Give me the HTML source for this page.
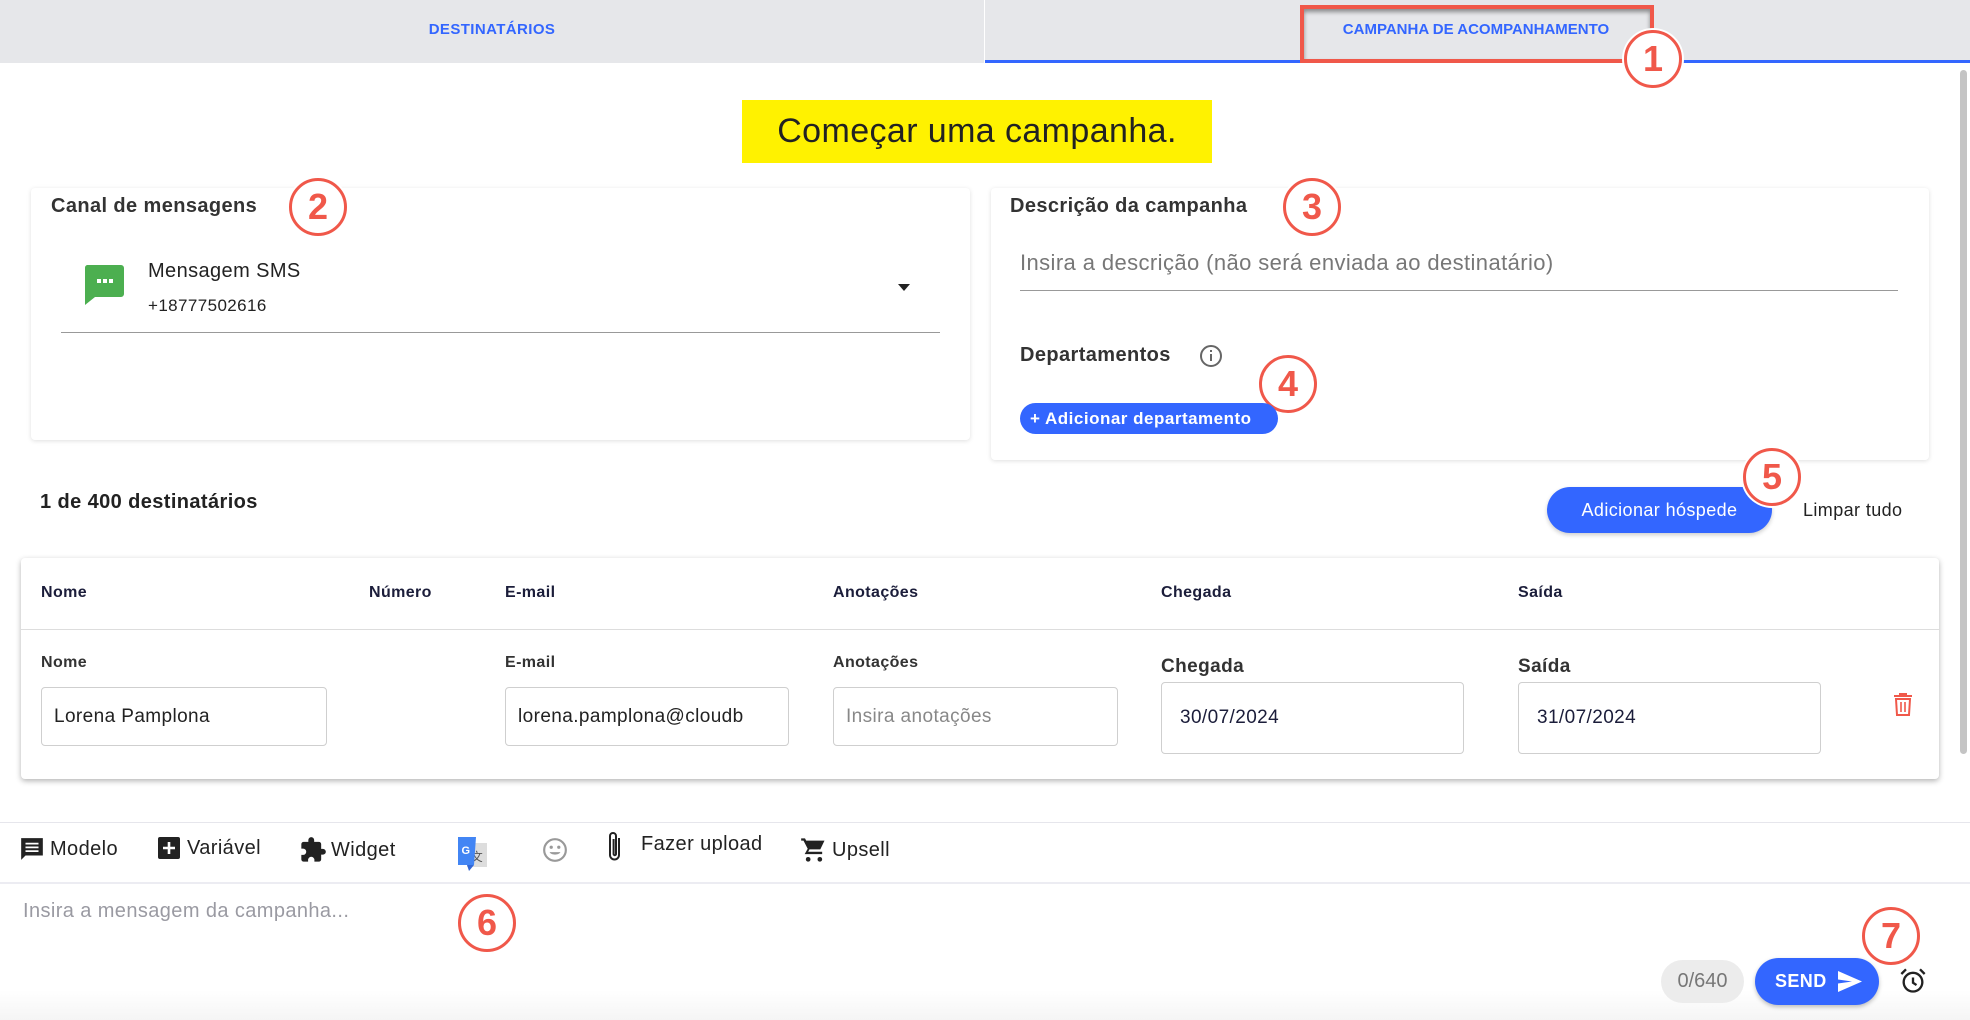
<!DOCTYPE html>
<html><head><meta charset="utf-8"><style>
*{box-sizing:border-box;margin:0;padding:0}
body{width:1970px;height:1020px;overflow:hidden;background:#fff;font-family:"Liberation Sans",sans-serif;position:relative;color:#222;letter-spacing:0.4px}
.a{position:absolute;white-space:nowrap}
.circ{position:absolute;width:58px;height:58px;border-radius:50%;border:3px solid #f0584a;background:#fff;box-shadow:0 0 0 2px #fff;color:#f0584a;font-weight:bold;font-size:36px;text-align:center;line-height:52px;letter-spacing:0}
.card{position:absolute;background:#fff;border-radius:4px;box-shadow:0 1px 5px rgba(0,0,0,.13)}
.lbl{font-size:16px;color:#1b1d3a;font-weight:bold}
.inp{position:absolute;border:1px solid #cfcfcf;border-radius:4px;background:#fff;font-size:19px;padding-left:12px;display:flex;align-items:center;color:#222;overflow:hidden}
.tb{position:absolute;top:836px;font-size:20px;color:#222;display:flex;align-items:center}
</style></head><body>
<div class="a" style="left:0;top:0;width:1970px;height:63px;background:#e6e7ea"></div>
<div class="a" style="left:984px;top:0;width:1px;height:63px;background:#fff"></div>
<div class="a" style="left:985px;top:60px;width:985px;height:3px;background:#3366ff"></div>
<div class="a" style="left:0;top:21px;width:984px;text-align:center;font-size:15px;font-weight:bold;color:#3366ff">DESTINATÁRIOS</div>
<div class="a" style="left:1300px;top:5px;width:354px;height:58px;border:4px solid #f0584a;box-shadow:inset 0 3px 4px rgba(0,0,0,.4)"></div>
<div class="a" style="left:1306px;top:21px;width:340px;text-align:center;font-size:15px;font-weight:bold;color:#3366ff;letter-spacing:0">CAMPANHA DE ACOMPANHAMENTO</div>
<div class="circ" style="left:1624px;top:30px">1</div>
<div class="a" style="left:1960px;top:70px;width:7px;height:684px;background:#c4c4c4;border-radius:4px"></div>
<div class="a" style="left:742px;top:100px;width:470px;height:63px;background:#fff200;font-size:34px;color:#222;text-align:center;line-height:63px">Começar uma campanha.</div>
<div class="card" style="left:31px;top:188px;width:939px;height:252px"></div>
<div class="a" style="left:51px;top:195px;font-size:20px;font-weight:bold;color:#333">Canal de mensagens</div>
<div class="circ" style="left:289px;top:178px">2</div>
<svg class="a" style="left:84px;top:265px" width="40" height="40" viewBox="0 0 40 40"><path d="M3 0h34a3 3 0 0 1 3 3v26a3 3 0 0 1-3 3H11L1 40V3a3 3 0 0 1 2-3z" fill="#4caf50"/><rect x="13" y="14" width="4" height="4" fill="#fff"/><rect x="19" y="14" width="4" height="4" fill="#fff"/><rect x="25" y="14" width="4" height="4" fill="#fff"/></svg>
<div class="a" style="left:148px;top:260px;font-size:20px;color:#222">Mensagem SMS</div>
<div class="a" style="left:148px;top:296px;font-size:17px;color:#222">+18777502616</div>
<div class="a" style="left:898px;top:284px;width:0;height:0;border-left:6px solid transparent;border-right:6px solid transparent;border-top:7px solid #222"></div>
<div class="a" style="left:61px;top:332px;width:879px;height:1px;background:#999"></div>
<div class="card" style="left:991px;top:188px;width:938px;height:272px"></div>
<div class="a" style="left:1010px;top:195px;font-size:20px;font-weight:bold;color:#333">Descrição da campanha</div>
<div class="circ" style="left:1283px;top:178px">3</div>
<div class="a" style="left:1020px;top:250px;font-size:22px;color:#777">Insira a descrição (não será enviada ao destinatário)</div>
<div class="a" style="left:1020px;top:290px;width:878px;height:1px;background:#999"></div>
<div class="a" style="left:1020px;top:344px;font-size:20px;font-weight:bold;color:#333">Departamentos</div>
<svg class="a" style="left:1199px;top:344px" width="24" height="24" viewBox="0 0 24 24"><circle cx="12" cy="12" r="10" fill="none" stroke="#666" stroke-width="2"/><rect x="11" y="10" width="2" height="7" fill="#666"/><rect x="11" y="6" width="2" height="2" fill="#666"/></svg>
<div class="circ" style="left:1259px;top:355px">4</div>
<div class="a" style="left:1020px;top:403px;width:258px;height:31px;background:#3366ff;border-radius:16px;color:#fff;font-size:17px;line-height:31px;padding-left:10px;letter-spacing:0.5px;font-weight:bold">+ Adicionar departamento</div>
<div class="a" style="left:40px;top:491px;font-size:20px;font-weight:bold;color:#222">1 de 400 destinatários</div>
<div class="a" style="left:1547px;top:487px;width:225px;height:46px;background:#3366ff;border-radius:23px;color:#fff;font-size:18px;text-align:center;line-height:46px;box-shadow:0 2px 4px rgba(0,0,0,.2)">Adicionar hóspede</div>
<div class="circ" style="left:1743px;top:448px">5</div>
<div class="a" style="left:1803px;top:500px;font-size:18px;color:#222">Limpar tudo</div>
<div class="card" style="left:21px;top:558px;width:1918px;height:221px;box-shadow:0 2px 6px rgba(0,0,0,.3)"></div>
<div class="a" style="left:21px;top:629px;width:1918px;height:1px;background:#ddd"></div>
<div class="a lbl" style="left:41px;top:584px">Nome</div>
<div class="a lbl" style="left:369px;top:584px">Número</div>
<div class="a lbl" style="left:505px;top:584px">E-mail</div>
<div class="a lbl" style="left:833px;top:584px">Anotações</div>
<div class="a lbl" style="left:1161px;top:584px">Chegada</div>
<div class="a lbl" style="left:1518px;top:584px">Saída</div>
<div class="a lbl" style="left:41px;top:654px;color:#333">Nome</div>
<div class="a lbl" style="left:505px;top:654px;color:#333">E-mail</div>
<div class="a lbl" style="left:833px;top:654px;color:#333">Anotações</div>
<div class="a" style="left:1161px;top:656px;font-size:19px;color:#333;font-weight:bold">Chegada</div>
<div class="a" style="left:1518px;top:656px;font-size:19px;color:#333;font-weight:bold">Saída</div>
<div class="inp" style="left:41px;top:687px;width:286px;height:59px">Lorena Pamplona</div>
<div class="inp" style="left:505px;top:687px;width:284px;height:59px">lorena.pamplona@cloudb</div>
<div class="inp" style="left:833px;top:687px;width:285px;height:59px;color:#888">Insira anotações</div>
<div class="inp" style="left:1161px;top:682px;width:303px;height:72px;padding-left:18px;color:#1b1d3a">30/07/2024</div>
<div class="inp" style="left:1518px;top:682px;width:303px;height:72px;padding-left:18px;color:#1b1d3a">31/07/2024</div>
<svg class="a" style="left:1893px;top:692px" width="20" height="24" viewBox="0 0 20 24"><path d="M6 1h8v2h5v2H1V3h5z" fill="#f0584a"/><path d="M3 7h14l-1 16H4z" fill="none" stroke="#f0584a" stroke-width="2"/><path d="M8 10v10M12 10v10" stroke="#f0584a" stroke-width="1.6"/></svg>
<div class="a" style="left:0;top:822px;width:1970px;height:1px;background:#e6e6ec"></div>
<div class="a" style="left:0;top:882px;width:1970px;height:2px;background:#ececf2"></div>
<div class="a" style="left:0;top:990px;width:1970px;height:30px;background:linear-gradient(#fff,#f5f5f5)"></div>
<div class="tb" style="left:19px"><svg width="26" height="26" viewBox="0 0 24 24"><path d="M2 2h20v16H6l-4 4z" fill="#222"/><path d="M6 7h12M6 10.5h12M6 14h12" stroke="#fff" stroke-width="1.6"/></svg><span style="margin-left:5px">Modelo</span></div>
<div class="tb" style="left:157px"><svg width="24" height="24" viewBox="0 0 24 24"><rect x="1" y="1" width="22" height="22" rx="2" fill="#222"/><path d="M12 6v12M6 12h12" stroke="#fff" stroke-width="2.6"/></svg><span style="margin-left:6px">Variável</span></div>
<div class="tb" style="left:299px"><svg width="28" height="28" viewBox="0 0 24 24"><path d="M20.5 11H19V7a2 2 0 0 0-2-2h-4V3.5a2.5 2.5 0 0 0-5 0V5H4a2 2 0 0 0-2 2v3.8h1.5a2.7 2.7 0 0 1 0 5.4H2V20a2 2 0 0 0 2 2h3.8v-1.5a2.7 2.7 0 0 1 5.4 0V22H17a2 2 0 0 0 2-2v-4h1.5a2.5 2.5 0 0 0 0-5z" fill="#222"/></svg><span style="margin-left:4px">Widget</span></div>
<svg class="a" style="left:458px;top:837px" width="30" height="34" viewBox="0 0 30 34"><rect x="9" y="6" width="20" height="24" fill="#ddd"/><text x="19" y="24" font-size="12" fill="#555" text-anchor="middle" font-family="Noto Sans CJK SC,sans-serif">文</text><path d="M0 0h18l-2 28H0z" fill="#4285f4"/><text x="8" y="17" font-size="11" fill="#fff" font-weight="bold" text-anchor="middle" font-family="Liberation Sans,sans-serif">G</text><path d="M9 28l7 0-5 6z" fill="#3367d6"/></svg>
<svg class="a" style="left:542px;top:837px" width="26" height="26" viewBox="0 0 24 24"><circle cx="12" cy="12" r="10" fill="none" stroke="#999" stroke-width="2"/><circle cx="8.5" cy="9.5" r="1.5" fill="#999"/><circle cx="15.5" cy="9.5" r="1.5" fill="#999"/><path d="M7 14c1.5 3 8.5 3 10 0z" fill="#999"/></svg>
<svg class="a" style="left:606px;top:830px" width="18" height="34" viewBox="0 0 18 34"><path d="M13 8v17a4.5 4.5 0 0 1-9 0V6a3 3 0 0 1 6 0v18a1.2 1.2 0 0 1-2.4 0V9" fill="none" stroke="#222" stroke-width="2"/></svg>
<div class="a" style="left:641px;top:833px;font-size:20px;color:#222">Fazer upload</div>
<div class="tb" style="left:800px"><svg width="28" height="28" viewBox="0 0 24 24"><path d="M1 2h3.3l1 2H21l-3.6 7.5H8.1L7 13.5h12v2H4l2.6-4.6L3 4H1z" fill="#222"/><circle cx="7" cy="20" r="2" fill="#222"/><circle cx="17" cy="20" r="2" fill="#222"/></svg><span style="margin-left:4px">Upsell</span></div>
<div class="a" style="left:23px;top:900px;font-size:20px;color:#9a9aa2">Insira a mensagem da campanha...</div>
<div class="circ" style="left:458px;top:894px">6</div>
<div class="circ" style="left:1862px;top:907px">7</div>
<div class="a" style="left:1661px;top:960px;width:83px;height:43px;background:#ececec;border-radius:22px;font-size:20px;color:#777;text-align:center;line-height:43px;letter-spacing:0">0/640</div>
<div class="a" style="left:1755px;top:958px;width:124px;height:47px;background:#3366ff;border-radius:24px;box-shadow:0 2px 4px rgba(0,0,0,.25);color:#fff;font-size:18px;line-height:47px;padding-left:20px;font-weight:bold">SEND<svg style="position:absolute;left:83px;top:13px" width="24" height="21" viewBox="0 0 24 21"><path d="M0 0l24 10.5L0 21V12.5l14-2-14-2z" fill="#fff"/></svg></div>
<svg class="a" style="left:1899px;top:967px" width="28" height="28" viewBox="0 0 24 24"><circle cx="12" cy="13" r="8" fill="none" stroke="#222" stroke-width="2"/><path d="M12 9v4.5l3 2" fill="none" stroke="#222" stroke-width="2"/><path d="M2 6l4-4M22 6l-4-4" stroke="#222" stroke-width="2"/></svg>
</body></html>
